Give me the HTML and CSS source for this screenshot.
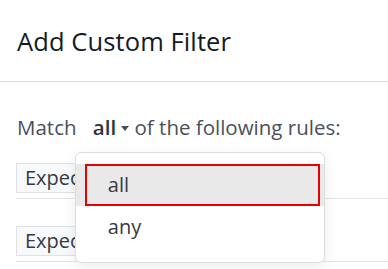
FILE: index.html
```html
<!DOCTYPE html>
<html lang="en">
<head>
  <meta charset="UTF-8" />
  <title>Add Custom Filter</title>
  <link rel="stylesheet" href="styles.css">
</head>
<body>
  <div class="modal">
    <header class="modal-header">
      <h4 class="modal-title">Add Custom Filter</h4>
    </header>

    <div class="modal-body">
      <div class="match">
        Match
        <span class="select">
          all<span class="caret"></span>
          <ul class="dropdown">
            <li class="dropdown-item active">all</li>
            <li class="dropdown-item">any</li>
          </ul>
        </span>
        of the following rules:
      </div>

      <div class="rule">
        <div class="field">Expected Revenue</div>
      </div>
      <div class="rule">
        <div class="field">Expected Revenue</div>
      </div>
    </div>
  </div>
</body>
</html>
```

FILE: styles.css
```css
* {
  box-sizing: border-box;
  margin: 0;
  padding: 0;
}

body {
  font-family: 'Open Sans', 'Noto Sans', sans-serif;
  background: #fff;
  color: #4a4f5a;
  width: 388px;
  height: 269px;
  overflow: hidden;
}

.modal-header {
  height: 82px;
  display: flex;
  align-items: center;
  padding: 0 17px;
  border-bottom: 1px solid #dcdde0;
}

.modal-title {
  font-size: 25.5px;
  font-weight: 500;
  color: #141b27;
  letter-spacing: 0.1px;
}

.modal-body {
  padding: 0 0 0 16px;
}

.match {
  font-size: 20.5px;
  line-height: 28px;
  margin-top: 31px;
  padding-left: 1px;
  white-space: nowrap;
}

.select {
  position: relative;
  margin-left: 11px;
  color: #2e343e;
  font-weight: 600;
}

.caret {
  display: inline-block;
  width: 0;
  height: 0;
  margin-left: 5px;
  vertical-align: 4px;
  border-left: 4px solid transparent;
  border-right: 4px solid transparent;
  border-top: 5px solid #4a4f5a;
}

.dropdown {
  position: absolute;
  top: 39px;
  left: -18px;
  width: 250px;
  padding: 11px 0 14px;
  list-style: none;
  background: #fff;
  border: 1px solid #dcdde0;
  border-radius: 6px;
  box-shadow: 0 4px 14px rgba(0, 0, 0, 0.08);
  font-weight: 400;
  z-index: 2;
}

.dropdown-item {
  position: relative;
  height: 42px;
  line-height: 42px;
  padding-left: 32px;
  font-size: 20px;
  color: #343a45;
}

.dropdown-item.active {
  background: #e9e9e9;
}

.dropdown-item.active::after {
  content: "";
  position: absolute;
  top: 0;
  bottom: 0;
  left: 9px;
  right: 4px;
  border: 2px solid #e60000;
}

.rule {
  padding: 27px 0 5px;
  border-bottom: 1px solid #e4e5e8;
}

.match + .rule {
  padding-top: 22px;
}

.field {
  width: 160px;
  height: 30px;
  line-height: 28px;
  padding-left: 8px;
  font-size: 20px;
  background: #f8f9fa;
  border: 1px solid #dee2e6;
  color: #343a45;
  overflow: hidden;
  white-space: nowrap;
}
```
